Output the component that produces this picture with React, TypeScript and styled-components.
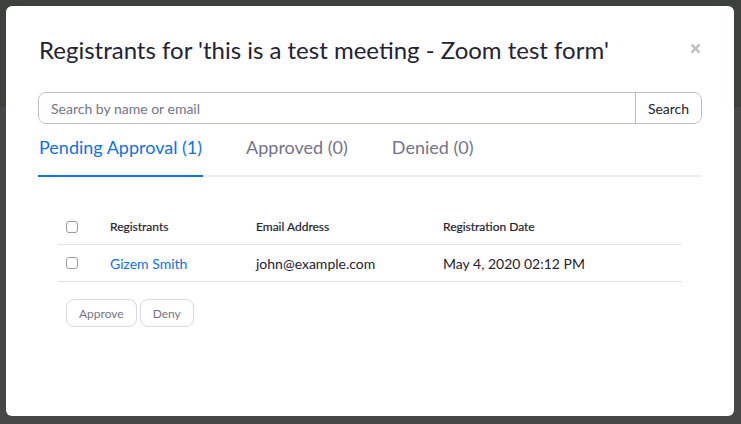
import React from "react";
import styled, { createGlobalStyle } from "styled-components";

const GlobalStyle = createGlobalStyle`
  html, body { margin: 0; padding: 0; }
  body {
    font-family: Lato, "Open Sans", Arial, sans-serif;
    background: linear-gradient(#3d413b 0, #3d413b 107px, #474747 107px, #474747 100%);
  }
  * { box-sizing: border-box; }
`;

const Page = styled.div`
  width: 741px;
  height: 424px;
  padding: 6px 7px 8px 6px;
`;

const Modal = styled.div`
  width: 728px;
  height: 410px;
  background: #ffffff;
  border-radius: 6px;
  padding: 28px 32px 0 32px;
  display: flex;
  flex-direction: column;
`;

const Header = styled.div`
  display: flex;
  justify-content: space-between;
  align-items: flex-start;
`;

const Title = styled.h2`
  margin: 0 0 0 1px;
  font-family: Lato, sans-serif;
  font-weight: 400;
  font-size: 24px;
  line-height: 32px;
  color: #232333;
`;

const Close = styled.button`
  border: 0;
  background: none;
  padding: 0;
  margin: 9px 1px 0 0;
  width: 11px;
  height: 11px;
  display: flex;
  cursor: pointer;
`;

const SearchBar = styled.div`
  margin-top: 26px;
  display: flex;
  height: 32px;
  border: 1px solid #babacc;
  border-radius: 8px;
  overflow: hidden;
`;

const SearchInput = styled.input`
  flex: 1;
  border: 0;
  outline: none;
  padding: 0 12px;
  font-family: Lato, sans-serif;
  font-size: 14px;
  color: #232333;
  &::placeholder { color: #747487; }
`;

const SearchButton = styled.button`
  width: 66px;
  border: 0;
  border-left: 1px solid #babacc;
  background: #fff;
  font-family: Lato, sans-serif;
  font-size: 14px;
  color: #232333;
  padding: 0;
`;

const TabList = styled.div`
  display: flex;
  gap: 42px;
  border-bottom: 2px solid #efeff3;
`;

const Tab = styled.div<{ $active?: boolean }>`
  padding: 11px 1px 16px 1px;
  margin-bottom: -2px;
  font-family: Lato, sans-serif;
  font-size: 18px;
  line-height: 24px;
  color: ${(p) => (p.$active ? "#0e72ed" : "#747487")};
  border-bottom: 2px solid ${(p) => (p.$active ? "#0e72ed" : "transparent")};
`;

const Table = styled.div`
  margin: 32px 20px 0 20px;
`;

const Row = styled.div<{ $head?: boolean }>`
  display: grid;
  grid-template-columns: 52px 146px 187px 1fr;
  align-items: center;
  height: ${(p) => (p.$head ? "36px" : "37px")};
  border-bottom: 1px solid #e2e2e6;
  font-family: Lato, sans-serif;
  font-size: ${(p) => (p.$head ? "12px" : "14px")};
  color: #232333;
  -webkit-text-stroke: ${(p) => (p.$head ? "0.2px #232333" : "0")};
`;

const Check = styled.span`
  display: block;
  width: 12px;
  height: 12px;
  margin-left: 8px;
  border: 1px solid #9a9aa2;
  border-radius: 3px;
  background: #fff;
`;

const NameLink = styled.a`
  color: #0e72ed;
  text-decoration: none;
`;

const Actions = styled.div`
  display: flex;
  gap: 3px;
  margin: 17px 0 0 28px;
`;

const ActionButton = styled.button`
  height: 28px;
  padding: 0 12px;
  border: 1px solid #d9d9e1;
  border-radius: 8px;
  background: #fff;
  font-family: Lato, sans-serif;
  font-size: 12px;
  color: #747487;
`;

export default function App() {
  return (
    <>
      <GlobalStyle />
      <Page>
        <Modal>
          <Header>
            <Title>Registrants for 'this is a test meeting - Zoom test form'</Title>
            <Close aria-label="close">
              <svg width="11" height="11" viewBox="0 0 11 11">
                <path d="M1.5 1.5 L9.5 9.5 M9.5 1.5 L1.5 9.5" stroke="#c2c2c6" strokeWidth="2.6" strokeLinecap="butt" />
              </svg>
            </Close>
          </Header>
          <SearchBar>
            <SearchInput placeholder="Search by name or email" />
            <SearchButton>Search</SearchButton>
          </SearchBar>
          <TabList>
            <Tab $active>Pending Approval (1)</Tab>
            <Tab>Approved (0)</Tab>
            <Tab>Denied (0)</Tab>
          </TabList>
          <Table>
            <Row $head>
              <Check />
              <span>Registrants</span>
              <span>Email Address</span>
              <span>Registration Date</span>
            </Row>
            <Row>
              <Check />
              <NameLink href="#">Gizem Smith</NameLink>
              <span>john@example.com</span>
              <span>May 4, 2020 02:12 PM</span>
            </Row>
          </Table>
          <Actions>
            <ActionButton>Approve</ActionButton>
            <ActionButton>Deny</ActionButton>
          </Actions>
        </Modal>
      </Page>
    </>
  );
}
